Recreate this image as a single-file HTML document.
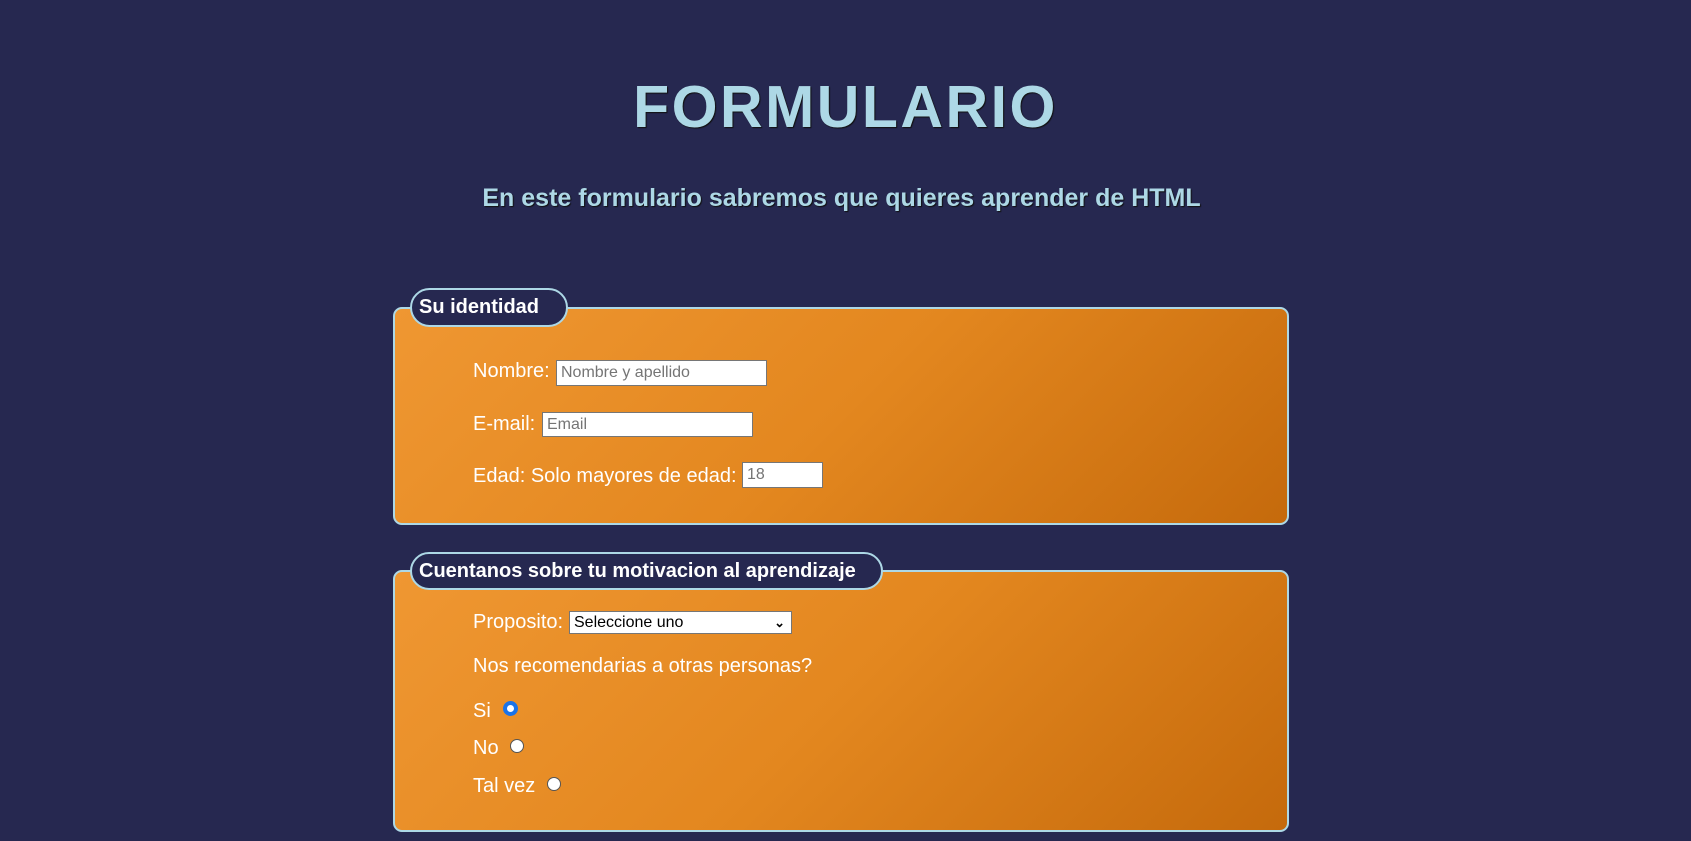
<!DOCTYPE html>
<html><head><meta charset="utf-8"><style>
body{margin:0;width:1691px;height:841px;background:#262850;font-family:"Liberation Sans",sans-serif;position:relative;overflow:hidden}
.a{position:absolute;white-space:nowrap}
h1{position:absolute;left:0;width:1691px;top:76px;margin:0;text-align:center;font-size:59px;font-weight:bold;letter-spacing:2.5px;color:#add8e6;line-height:62px;text-shadow:1px 1px 1px #111}
h2{position:absolute;left:0;width:1683px;top:184px;margin:0;text-align:center;font-size:25px;font-weight:bold;color:#add8e6;line-height:28px;text-shadow:1px 1px 1px #111}
.fs{position:absolute;left:393px;width:896px;border:2px solid #add8e6;border-radius:9px;background:linear-gradient(135deg,#ef9732 0%,#e3871f 50%,#c56a0c 100%);box-sizing:border-box}
.lg{position:absolute;left:410px;background:#262850;border:2px solid #add8e6;border-radius:20px;color:#fff;font-weight:bold;font-size:20px;box-sizing:border-box;padding-left:7px;line-height:35px}
.l{color:#fff;font-size:20px;line-height:22px}
.in{position:absolute;background:#fff;border:1px solid #767676;box-sizing:border-box;font-size:16px;color:#757575;padding-left:4px;line-height:24px}
.r{position:absolute;width:14px;height:14px;border-radius:50%;background:#fff;border:1px solid #555;box-sizing:border-box}
</style></head><body>
<h1>FORMULARIO</h1>
<h2>En este formulario sabremos que quieres aprender de HTML</h2>

<div class="fs" style="top:307px;height:218px"></div>
<div class="lg" style="top:288px;width:158px;height:39px">Su identidad</div>
<div class="a l" style="left:473px;top:360px">Nombre:</div>
<div class="in" style="left:556px;top:360px;width:211px;height:26px">Nombre y apellido</div>
<div class="a l" style="left:473px;top:413px">E-mail:</div>
<div class="in" style="left:542px;top:412px;width:211px;height:25px">Email</div>
<div class="a l" style="left:473px;top:465px">Edad: Solo mayores de edad:</div>
<div class="in" style="left:742px;top:462px;width:81px;height:26px">18</div>

<div class="fs" style="top:570px;height:262px"></div>
<div class="lg" style="top:552px;width:473px;height:38px">Cuentanos sobre tu motivacion al aprendizaje</div>
<div class="a l" style="left:473px;top:611px">Proposito:</div>
<div class="in" style="left:569px;top:611px;width:223px;height:23px;color:#000;line-height:21px;font-size:16px">Seleccione uno<span style="position:absolute;right:6px;top:0;font-size:13px;font-weight:bold">&#8964;</span></div>
<div class="a l" style="left:473px;top:655px">Nos recomendarias a otras personas?</div>
<div class="a l" style="left:473px;top:700px">Si</div>
<div class="r" style="left:503px;top:701px;border:4px solid #1a73e8;width:15px;height:15px"></div>
<div class="a l" style="left:473px;top:737px">No</div>
<div class="r" style="left:510px;top:739px"></div>
<div class="a l" style="left:473px;top:775px">Tal vez</div>
<div class="r" style="left:547px;top:777px"></div>
</body></html>
